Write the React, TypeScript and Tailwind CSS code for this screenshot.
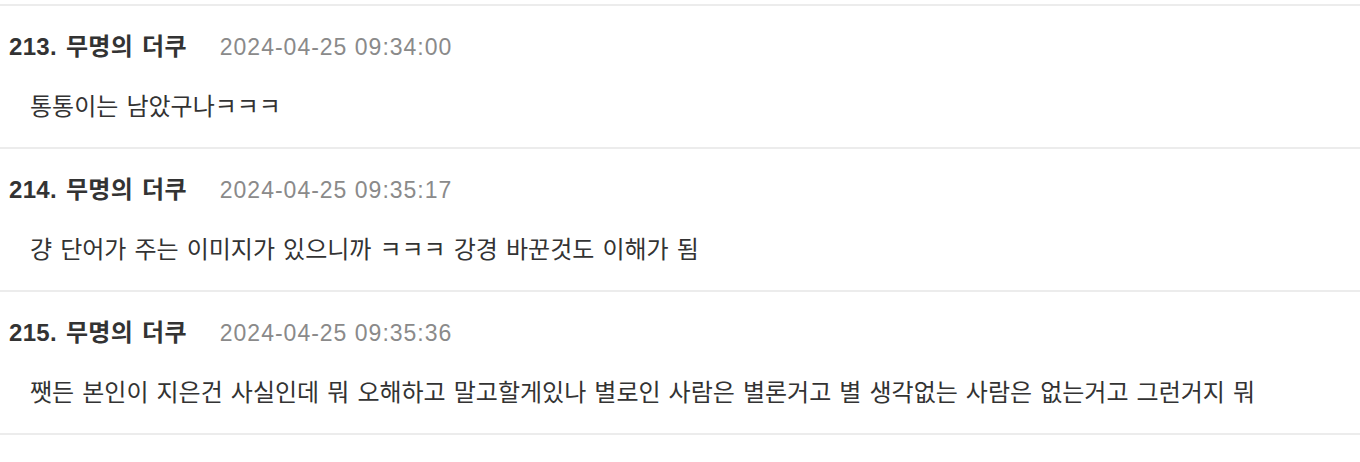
const comments = [
  { no: 213, nick: "무명의 더쿠", date: "2024-04-25 09:34:00", body: "통통이는 남았구나ㅋㅋㅋ" },
  { no: 214, nick: "무명의 더쿠", date: "2024-04-25 09:35:17", body: "걍 단어가 주는 이미지가 있으니까 ㅋㅋㅋ 강경 바꾼것도 이해가 됨" },
  {
    no: 215,
    nick: "무명의 더쿠",
    date: "2024-04-25 09:35:36",
    body: "쨋든 본인이 지은건 사실인데 뭐 오해하고 말고할게있나 별로인 사람은 별론거고 별 생각없는 사람은 없는거고 그런거지 뭐",
  },
  { no: 216, nick: "무명의 더쿠", date: "2024-04-25 09:36:02", body: "" },
];

export default function App() {
  return (
    <div
      className="w-[1360px] h-[462px] overflow-hidden bg-white pt-1"
      style={{ fontFamily: '"Liberation Sans", "Noto Sans CJK KR", sans-serif' }}
    >
      <ul>
        {comments.map((c) => (
          <li key={c.no} className="border-t-2 border-[#ececec] pl-[9px] pt-[26px] pb-[25px]">
            <div className="flex items-center h-[30px]">
              <span className="text-[24px] font-bold text-[#333] tracking-[0.3px] [word-spacing:2px]">
                {c.no}. {c.nick}
              </span>
              <span className="ml-[33px] text-[23px] text-[#8a8a8a] tracking-[1px]">{c.date}</span>
            </div>
            <p className="mt-[30px] pl-[21px] h-[30px] leading-[30px] text-[24px] text-[#333] [word-spacing:1.4px]">
              {c.body}
            </p>
          </li>
        ))}
      </ul>
    </div>
  );
}
